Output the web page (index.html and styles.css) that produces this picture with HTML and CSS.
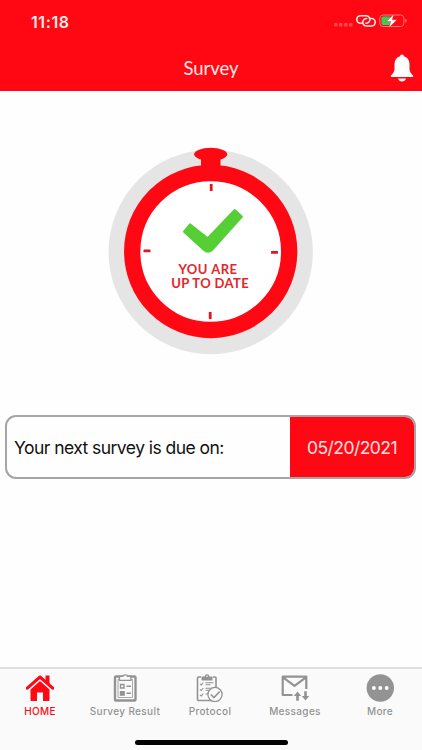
FILE: index.html
```html
<!DOCTYPE html>
<html lang="en">
<head>
  <meta charset="UTF-8">
  <meta name="viewport" content="width=device-width, initial-scale=1.0">
  <title>Survey</title>
  <link rel="stylesheet" href="styles.css">
</head>
<body>

  <header class="header">
    <div class="status">
      <span class="time">11:18</span>
      <svg class="status-icons" width="76" height="16" viewBox="0 0 76 16">
        <g fill="#ff4a50">
          <rect x="2" y="11" width="3.6" height="3.6" rx="1"/>
          <rect x="7" y="11" width="3.6" height="3.6" rx="1"/>
          <rect x="12" y="11" width="3.6" height="3.6" rx="1"/>
          <rect x="17" y="11" width="3.6" height="3.6" rx="1"/>
        </g>
        <g fill="none" stroke="#ffe9e9" stroke-width="1.6" stroke-linecap="round">
          <path d="M29.5 11.2h-1a3.7 3.7 0 0 1 0-7.4h5.7a3.7 3.7 0 0 1 2.8 6.2q-1 1.2-3 1.2"/>
          <path d="M37.5 6.5h2a3.7 3.7 0 0 1 0 7.5h-5a3.7 3.7 0 0 1-2.8-6.2q1-1.300 3-1.300"/>
        </g>
        <rect x="47.8" y="3" width="24" height="11.5" rx="3.2" fill="none" stroke="#ff7478"/>
        <path d="M73.2 6.8q1.700.3 1.700 2t-1.700 2z" fill="#ff7478"/>
        <rect x="49.5" y="4.5" width="9.5" height="8.5" rx="1.7" fill="#3ecb55"/>
        <path d="M62 1.800L54.600 9.500h4.200l-2 6.300L65 7.800h-4.700z" fill="#fff" stroke="#ff0813" stroke-width=".4"/>
      </svg>
    </div>
    <div class="navbar">
      <h1>Survey</h1>
      <svg class="bell" width="24" height="28" viewBox="0 0 24 28">
        <path d="M10.1 2.300a1.900 1.900 0 0 1 3.800 0q5.400 1.500 5.600 7.700v5q0 3.500 3.600 6.400.6 1.600-.8 1.600H1.700q-1.400 0-.8-1.600 3.600-2.900 3.600-6.400v-5q.2-6.200 5.600-7.700z" fill="#fff"/>
        <path d="M8 24.500h8q-1 3-4 3t-4-3z" fill="#fff"/>
      </svg>
    </div>
  </header>

  <main class="content">
    <svg class="watch" width="206" height="208" viewBox="0 0 206 208">
      <circle cx="102.7" cy="105" r="102.2" fill="#e5e5e5"/>
      <circle cx="102.7" cy="104.5" r="78.5" fill="#fff" stroke="#ff0813" stroke-width="16.3"/>
      <ellipse cx="102.7" cy="7.3" rx="16.5" ry="6.5" fill="#ff0813"/>
      <path d="M93 11h19.500v12H93z" fill="#ff0813"/>
      <g fill="#e8121b">
        <rect x="101.8" y="37" width="2.8" height="7" rx=".5"/>
        <rect x="100.8" y="165" width="2.8" height="7" rx=".5"/>
        <rect x="35.5" y="102.5" width="7" height="2.8" rx=".5"/>
        <rect x="163" y="104" width="7" height="2.8" rx=".5"/>
      </g>
      <path d="M76 84.700l6-7.400 17.700 14L126.700 63l7.300 6.700-30 33.300q-4 3.500-8 0z" fill="#55cf35" stroke="#55cf35" stroke-width="2" stroke-linejoin="round"/>
      <text x="70.5" y="127" textLength="58.5" class="watch-text">YOU ARE</text>
      <text x="63.2" y="141.3" textLength="77.5" class="watch-text">UP TO DATE</text>
    </svg>

    <div class="due">
      <div class="due-label">Your next survey is due on:</div>
      <div class="due-date">05/20/2021</div>
    </div>
  </main>

  <footer class="footer">
    <nav class="tabs">
      <a class="tab active">
        <svg width="30" height="28" viewBox="0 0 30 28">
          <path d="M2.300 14.200L15 3l12.700 11.200" fill="none" stroke="currentColor" stroke-width="3" stroke-linecap="round" stroke-linejoin="round"/>
          <path d="M20.500 1.500h4V11l-4-3.500zM15 7l9.500 8.400V26q0 1-1 1H18v-8.500h-6V27H6.500q-1 0-1-1V15.400z" fill="currentColor"/>
        </svg>
        <span>HOME</span>
      </a>
      <a class="tab">
        <svg width="30" height="28" viewBox="0 0 30 28">
          <rect x="5" y="2.500" width="20.500" height="24" rx="1" fill="none" stroke="currentColor" stroke-width="2.400"/>
          <path d="M8 5.500h14.500v18H8z" fill="none" stroke="currentColor" stroke-width=".8"/>
          <path d="M9.500 2.300h3.300Q13 .8 15.200.8t2.400 1.500h3.300v4H9.500z" fill="#fafafa" stroke="currentColor" stroke-width="1.300"/>
          <path d="M10.500 10.500h3.500V14h-3.500zM16.500 12.300H21M16.500 19.300H21" fill="none" stroke="currentColor" stroke-width="1.400"/>
          <path d="M9.800 17h5v4.800h-5z" fill="currentColor"/>
        </svg>
        <span>Survey Result</span>
      </a>
      <a class="tab">
        <svg width="30" height="28" viewBox="0 0 30 28">
          <path d="M6 3H3.500Q2.500 3 2.500 4v21.500q0 1 1 1H19M18 3h2q1 0 1 1v10" fill="none" stroke="currentColor" stroke-width="1.600"/>
          <path d="M6.500 2.500h3Q9.800.3 12 .3t2.500 2.200h3v4h-11z" fill="currentColor"/>
          <circle cx="12" cy="2.300" r=".8" fill="#fafafa"/>
          <path d="M5 10l1.300 1 2-2.500M5 15.500l1.300 1 2-2.500M5 21l1.300 1 2-2.500M10.500 8.700h8M10.500 10.700h5M10.500 14.300h6M10.500 16.300h4M10.500 20h2.500" fill="none" stroke="currentColor" stroke-width="1.100"/>
          <circle cx="20" cy="20.500" r="7.100" fill="#fafafa" stroke="currentColor" stroke-width="1.300"/>
          <path d="M15.800 20.500l3.200 3 5.700-6" fill="none" stroke="currentColor" stroke-width="1.700"/>
        </svg>
        <span>Protocol</span>
      </a>
      <a class="tab">
        <svg width="30" height="28" viewBox="0 0 30 28">
          <path d="M12.500 21H2.700V2.700h23.600V15M3 3.300l11.500 8.500L26 3.300" fill="none" stroke="currentColor" stroke-width="2.200" stroke-linejoin="round"/>
          <path d="M17.500 17.500l3.700 4.400h-2.400v4.800h-2.600v-4.800h-2.400zM24.200 17.300h2.600V22h2.400l-3.700 4.500-3.700-4.500h2.400z" fill="currentColor"/>
        </svg>
        <span>Messages</span>
      </a>
      <a class="tab">
        <svg width="30" height="28" viewBox="0 0 30 28">
          <circle cx="15.300" cy="14" r="13.700" fill="currentColor"/>
          <g fill="#fff">
            <circle cx="8.900" cy="14" r="1.900"/>
            <circle cx="15.300" cy="14" r="1.900"/>
            <circle cx="21.700" cy="14" r="1.900"/>
          </g>
        </svg>
        <span>More</span>
      </a>
    </nav>
    <div class="home-bar"></div>
  </footer>

</body>
</html>
```

FILE: styles.css
```css
* {
  box-sizing: border-box;
}

body {
  font-family: Inter, "Liberation Sans", sans-serif;
  display: flex;
  flex-direction: column;
  height: 100vh;
  margin: 0;
  overflow: hidden;
  background-color: #fefefe;
}

.header {
  height: 91px;
  background-color: #ff0813;
  color: #ffe9e9;
}

.status {
  display: flex;
  justify-content: space-between;
  height: 44px;
  padding: 13px 14px 0 31px;
}

.status-icons {
  margin-top: -1px;
}

.time {
  font-size: 16px;
  line-height: 18px;
  font-weight: 600;
  letter-spacing: 0.6px;
}

.navbar {
  display: grid;
  grid-template-columns: 1fr auto 1fr;
  align-items: center;
  height: 47px;
  padding: 0 8px;
}

.navbar h1 {
  grid-column: 2;
  margin: 0;
  font-family: Lato, sans-serif;
  font-size: 18.5px;
  font-weight: 400;
}

.bell {
  justify-self: end;
  margin-top: 1px;
}

.content {
  flex: 1;
  display: flex;
  flex-direction: column;
  padding: 56px 6px 0 5px;
}

.watch {
  margin-left: 103px;
}

.watch-text {
  font-family: Lato, sans-serif;
  font-size: 13px;
  font-weight: 700;
  fill: #e3262b;
}

.due {
  display: flex;
  height: 64px;
  margin-top: 60px;
  border: 2px solid #a5a5a5;
  border-radius: 11px;
  overflow: hidden;
  font-size: 17.5px;
  line-height: 61px;
  letter-spacing: -0.55px;
}

.due-label {
  flex: 1;
  padding-left: 7px;
  color: #111;
}

.due-date {
  width: 124px;
  text-align: center;
  background-color: #ff0813;
  color: #ffe3e3;
}

.footer {
  display: flex;
  flex-direction: column;
  justify-content: space-between;
  align-items: center;
  height: 83px;
  padding-bottom: 5px;
  border-top: 2px solid #e0e0e0;
  background-color: #fafafa;
}

.tabs {
  display: grid;
  grid-template-columns: repeat(5, 85px);
  padding-top: 5px;
  margin-right: 2px;
}

.tab {
  display: flex;
  flex-direction: column;
  align-items: center;
  gap: 2px;
  font-size: 10px;
  line-height: 14px;
  font-weight: 500;
  letter-spacing: 0.35px;
  color: #939393;
}

.active {
  color: #ff0813;
}

.home-bar {
  width: 153px;
  height: 5px;
  border-radius: 3px;
  background-color: #000;
}
```
